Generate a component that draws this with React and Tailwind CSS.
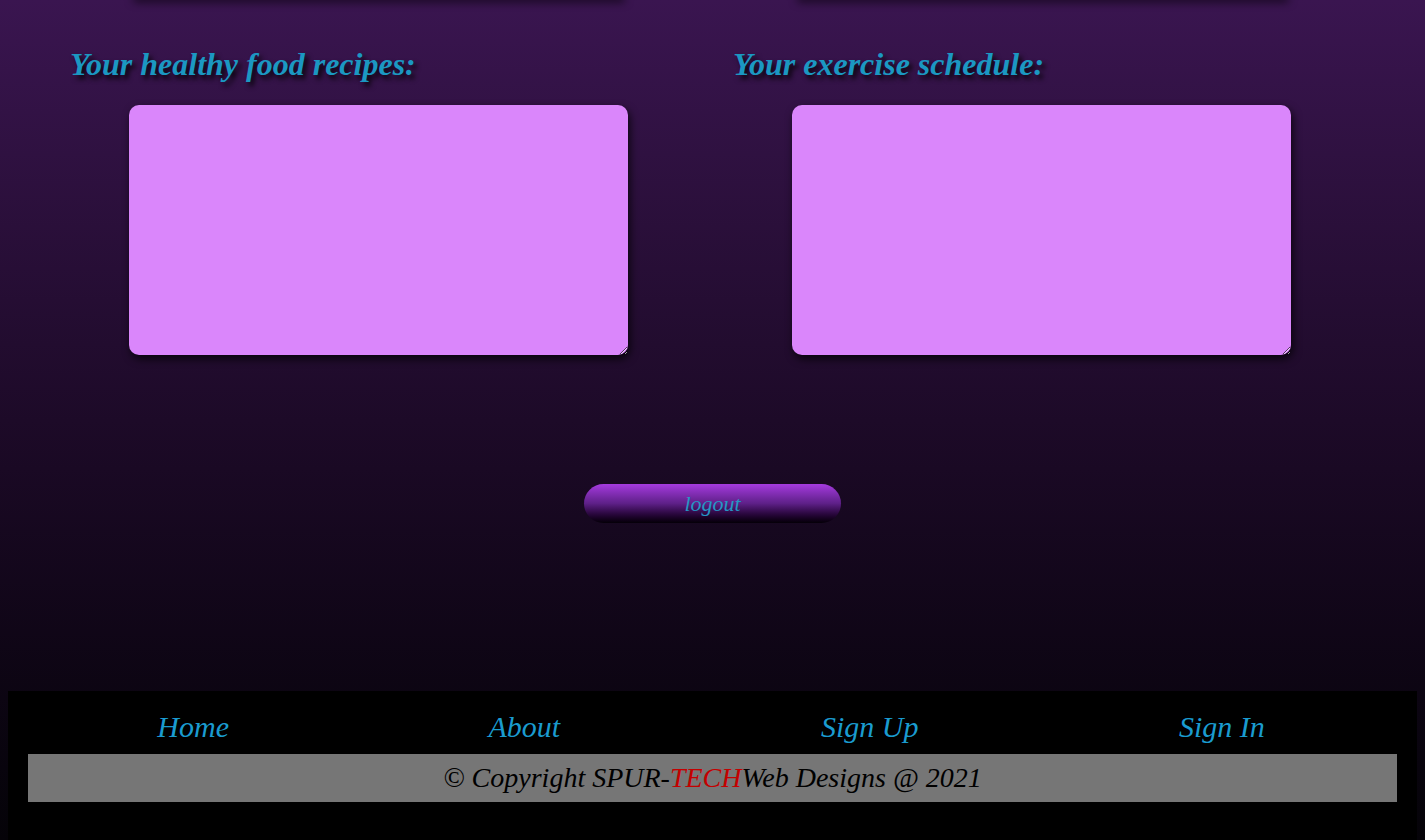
export default function App() {
  const serif = { fontFamily: '"Liberation Serif", "DejaVu Serif", serif' }
  return (
    <div
      className="h-[840px] overflow-hidden bg-gradient-to-b from-[#3a1550] via-[#1d0a28] via-50% to-[#050308] flex flex-col"
      style={serif}
    >
      <div className="flex h-0">
        <div className="ml-[133px] w-[492px] h-[6px] -mt-[6px] rounded-lg shadow-[0_2px_8px_rgba(0,0,0,0.7)]" />
        <div className="ml-[172px] w-[492px] h-[6px] -mt-[6px] rounded-lg shadow-[0_2px_8px_rgba(0,0,0,0.7)]" />
      </div>

      <div className="flex pt-[44px]">
        <section className="ml-[70px] w-[663px]">
          <h2 className="text-[32px] font-bold italic text-[#1b98c2] leading-[40px] [text-shadow:3px_4px_5px_rgba(0,0,0,0.85)]">
            Your healthy food recipes:
          </h2>
          <textarea className="mt-[21px] ml-[59px] block w-[499px] h-[250px] rounded-[10px] bg-[#da86fb] shadow-[2px_4px_8px_rgba(0,0,0,0.75)] outline-none" />
        </section>
        <section className="w-[663px]">
          <h2 className="text-[32px] font-bold italic text-[#1b98c2] leading-[40px] [text-shadow:3px_4px_5px_rgba(0,0,0,0.85)]">
            Your exercise schedule:
          </h2>
          <textarea className="mt-[21px] ml-[59px] block w-[499px] h-[250px] rounded-[10px] bg-[#da86fb] shadow-[2px_4px_8px_rgba(0,0,0,0.75)] outline-none" />
        </section>
      </div>

      <div className="flex justify-center pt-[129px]">
        <button
          type="button"
          className="w-[257px] h-[39px] rounded-full bg-gradient-to-b from-[#a63be0] via-[#5e2088] to-[#050008] text-[22px] italic text-[#2596c4] leading-[36px]"
        >
          logout
        </button>
      </div>

      <footer className="mt-auto mx-[8px] h-[149px] bg-black px-[20px] pt-[16px]">
        <nav className="grid grid-cols-4 text-[30px] italic text-[#1a9bcf] leading-[40px]">
          <a className="text-center pr-[12px]">Home</a>
          <a className="text-center pr-[34px]">About</a>
          <a className="text-center pr-[28px]">Sign Up</a>
          <a className="text-center pr-[8px]">Sign In</a>
        </nav>
        <div className="mt-[7px] h-[48px] bg-[#767676] flex items-center justify-center text-[28px] italic text-black">
          <span>
            © Copyright SPUR-<span className="text-[#c40000]">TECH</span>Web Designs @ 2021
          </span>
        </div>
      </footer>
    </div>
  )
}
